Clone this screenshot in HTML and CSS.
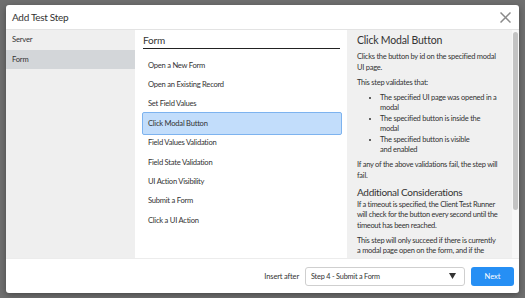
FILE: index.html
```html
<!DOCTYPE html>
<html>
<head>
<meta charset="utf-8">
<link rel="stylesheet" href="styles.css">
</head>
<body>
<div class="page">
  <div class="modal">
    <div class="modal-header">
      <span class="modal-title">Add Test Step</span>
      <svg class="close" width="11" height="11" viewBox="0 0 11 11"><path d="M0.5 0.5 L10.5 10.5 M10.5 0.5 L0.5 10.5" stroke="#8a8a8a" stroke-width="1.5" fill="none"/></svg>
    </div>
    <div class="modal-body">
      <div class="sidebar">
        <div class="side-item">Server</div>
        <div class="side-item active">Form</div>
      </div>
      <div class="middle">
        <div class="middle-heading">Form</div>
        <div class="step-list">
          <div class="step">Open a New Form</div>
          <div class="step">Open an Existing Record</div>
          <div class="step">Set Field Values</div>
          <div class="step selected">Click Modal Button</div>
          <div class="step">Field Values Validation</div>
          <div class="step">Field State Validation</div>
          <div class="step">UI Action Visibility</div>
          <div class="step">Submit a Form</div>
          <div class="step">Click a UI Action</div>
        </div>
      </div>
      <div class="detail">
        <div class="detail-title">Click Modal Button</div>
        <p>Clicks the button by id on the specified modal UI page.</p>
        <p>This step validates that:</p>
        <ul>
          <li>The specified UI page was opened in a modal</li>
          <li>The specified button is inside the modal</li>
          <li>The specified button is visible<br>and enabled</li>
        </ul>
        <p>If any of the above validations fail, the step will fail.</p>
        <div class="detail-sub">Additional Considerations</div>
        <p class="tight">If a timeout is specified, the Client Test Runner will check for the button every second until the timeout has been reached.</p>
        <p>This step will only succeed if there is currently a&nbsp;modal page open on the form, and if the specified button exists in that modal.</p>
      </div>
      <div class="scrollbar"><div class="thumb"></div></div>
    </div>
    <div class="modal-footer">
      <span class="insert-label">Insert after</span>
      <div class="select">
        <span>Step 4 - Submit a Form</span>
        <svg width="7" height="6" viewBox="0 0 7 6"><path d="M0 0 H7 L3.5 6 Z" fill="#333"/></svg>
      </div>
      <button class="next">Next</button>
    </div>
  </div>
</div>
</body>
</html>
```
FILE: styles.css
```css
* { box-sizing: border-box; }
html, body { margin: 0; padding: 0; }
body {
  width: 525px;
  height: 298px;
  overflow: hidden;
  background: #6f6f6f;
  font-family: Lato, "Open Sans", sans-serif;
  color: #333;
}
.page {
  padding: 5px 6px;
}
.modal {
  width: 513px;
  height: 288px;
  background: #fff;
  border-radius: 3px;
  box-shadow: 0 2px 6px rgba(0,0,0,0.35);
  display: flex;
  flex-direction: column;
  overflow: hidden;
}
.modal-header {
  height: 25px;
  flex: none;
  border-bottom: 1px solid #e3e3e3;
  display: flex;
  align-items: center;
  justify-content: space-between;
  padding: 0 8px 0 6px;
}
.modal-title {
  font-size: 10px;
  letter-spacing: -0.3px;
  color: #333;
}
.close { display: block; margin-top: 1px; }
.modal-body {
  height: 229px;
  flex: none;
  display: flex;
  border-bottom: 1px solid #ececec;
}
.sidebar {
  width: 129px;
  background: #efefef;
}
.side-item {
  height: 19.5px;
  line-height: 19.5px;
  padding-left: 6px;
  font-size: 7.6px;
  letter-spacing: -0.2px;
  color: #333;
}
.side-item.active { background: #d3d6d9; }
.middle {
  width: 212px;
  background: #fff;
  padding: 4px 7px 0 8px;
}
.middle-heading {
  font-size: 10px;
  letter-spacing: -0.2px;
  line-height: 13px;
  padding-bottom: 1px;
  border-bottom: 1px solid #222;
  color: #333;
}
.step-list {
  margin: 6.7px -2px 0 -1px;
}
.step {
  height: 19.4px;
  line-height: 19.4px;
  padding-left: 6px;
  font-size: 7.6px;
  letter-spacing: -0.25px;
  color: #333;
}
.step.selected {
  height: 23.4px;
  line-height: 21.4px;
  margin: -2px 0;
  background: #c2ddfb;
  border: 1px solid #7db3ef;
  border-radius: 2px;
  padding-left: 5px;
}
.detail {
  width: 165px;
  background: #f0f0f0;
  padding: 3px 9px 0 10px;
  overflow: hidden;
  font-size: 7.5px;
  letter-spacing: -0.25px;
  line-height: 10.5px;
  color: #333;
}
.detail-title {
  font-size: 10.5px;
  letter-spacing: -0.2px;
  line-height: 15px;
  margin-bottom: 4px;
}
.detail-sub {
  font-size: 10px;
  letter-spacing: -0.3px;
  line-height: 14px;
  margin: -1px 0 1px;
}
.detail p { margin: 0 0 4.5px; }
.detail p.tight { margin-right: -3px; letter-spacing: -0.3px; }
.detail ul {
  margin: 0 0 4.5px;
  padding: 0 4px 0 23px;
}
.scrollbar {
  width: 7px;
  background: #f7f7f7;
  padding: 2px 1px 0 1px;
}
.thumb {
  height: 178px;
  background: #c3c3c3;
  border-radius: 3px;
}
.modal-footer {
  flex: 1;
  display: flex;
  align-items: center;
  justify-content: flex-end;
  gap: 6px;
  padding-right: 5px;
}
.insert-label {
  font-size: 7.5px;
  letter-spacing: -0.15px;
  color: #333;
}
.select {
  width: 160px;
  height: 19px;
  border: 1px solid #cfcfcf;
  border-radius: 3px;
  display: flex;
  align-items: center;
  justify-content: space-between;
  padding: 0 8px 0 5px;
  font-size: 7.3px;
  letter-spacing: -0.2px;
  color: #333;
  background: #fff;
}
.next {
  width: 43px;
  height: 19px;
  border: none;
  border-radius: 3px;
  background: #268ff4;
  color: #fff;
  font-family: Lato, "Open Sans", sans-serif;
  font-size: 7.5px;
  padding: 0;
}
```
